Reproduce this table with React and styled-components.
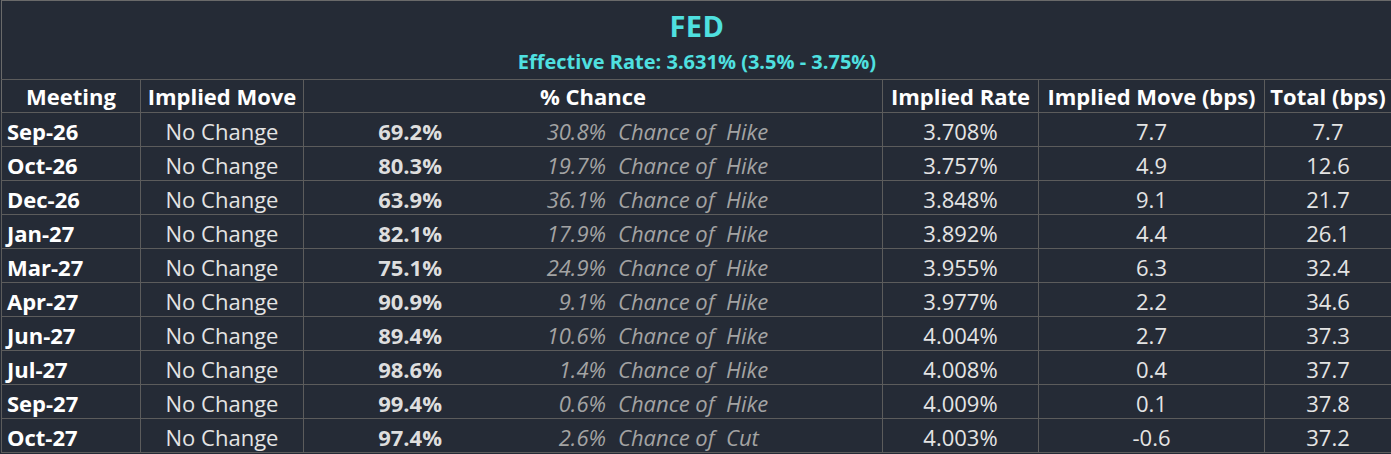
import React from 'react';
import styled, { createGlobalStyle } from 'styled-components';

const rows = [
  ['Sep-26', 'No Change', '69.2%', '30.8%', 'Hike', '3.708%', '7.7', '7.7'],
  ['Oct-26', 'No Change', '80.3%', '19.7%', 'Hike', '3.757%', '4.9', '12.6'],
  ['Dec-26', 'No Change', '63.9%', '36.1%', 'Hike', '3.848%', '9.1', '21.7'],
  ['Jan-27', 'No Change', '82.1%', '17.9%', 'Hike', '3.892%', '4.4', '26.1'],
  ['Mar-27', 'No Change', '75.1%', '24.9%', 'Hike', '3.955%', '6.3', '32.4'],
  ['Apr-27', 'No Change', '90.9%', '9.1%', 'Hike', '3.977%', '2.2', '34.6'],
  ['Jun-27', 'No Change', '89.4%', '10.6%', 'Hike', '4.004%', '2.7', '37.3'],
  ['Jul-27', 'No Change', '98.6%', '1.4%', 'Hike', '4.008%', '0.4', '37.7'],
  ['Sep-27', 'No Change', '99.4%', '0.6%', 'Hike', '4.009%', '0.1', '37.8'],
  ['Oct-27', 'No Change', '97.4%', '2.6%', 'Cut', '4.003%', '-0.6', '37.2'],
];

const GlobalStyle = createGlobalStyle`
  html, body {
    margin: 0;
    background: #252b36;
  }
  body {
    font-family: "Open Sans", "Noto Sans", sans-serif;
  }
`;

const Sheet = styled.div`
  width: 1390px;
  margin-left: 1px;
  border-top: 1px solid #6a6a6a;
  border-left: 1px solid #6a6a6a;
  background: #252b36;
`;

const TitleBlock = styled.div`
  height: 78px;
  display: flex;
  flex-direction: column;
  align-items: center;
  color: #4fe0e0;
  font-weight: 700;
`;

const Title = styled.div`
  font-size: 29px;
  line-height: 30px;
  margin-top: 10px;
  letter-spacing: 0.5px;
`;

const Subtitle = styled.div`
  font-size: 20px;
  line-height: 22px;
  margin-top: 10px;
`;

const Table = styled.table`
  border-collapse: collapse;
  table-layout: fixed;
  width: 1390px;
  margin-left: -1px;
  font-size: 22px;
  line-height: 26px;
`;

const HeadCell = styled.th`
  height: 32px;
  padding: 0;
  border: 1px solid #5c5c5c;
  color: #ffffff;
  font-weight: 700;
  text-align: center;
  white-space: nowrap;
  &:first-child { border-left-color: #6a6a6a; }
`;

const Cell = styled.td`
  height: 31px;
  padding: 2px ${p => (p.$left ? '5px' : '0')} 0;
  border: 1px solid #5c5c5c;
  color: ${p => (p.$bold ? '#ffffff' : '#e4e4e4')};
  font-weight: ${p => (p.$bold ? 700 : 400)};
  text-align: ${p => (p.$left ? 'left' : 'center')};
  white-space: nowrap;
`;

const Chance = styled.div`
  display: grid;
  grid-template-columns: 138px 164px 120px auto;
  align-items: center;
`;

const Prob = styled.span`
  text-align: right;
  font-weight: 700;
  color: #dedede;
`;

const Note = styled.span`
  font-style: italic;
  color: #a3a3a3;
  text-align: ${p => p.$align || 'left'};
  padding-left: ${p => p.$pad || 0}px;
`;

export default function App() {
  return (
    <>
      <GlobalStyle />
      <Sheet>
        <TitleBlock>
          <Title>FED</Title>
          <Subtitle>Effective Rate: 3.631% (3.5% - 3.75%)</Subtitle>
        </TitleBlock>
        <Table>
          <colgroup>
            <col style={{ width: 139 }} />
            <col style={{ width: 163 }} />
            <col style={{ width: 579 }} />
            <col style={{ width: 156 }} />
            <col style={{ width: 226 }} />
            <col style={{ width: 127 }} />
          </colgroup>
          <thead>
            <tr>
              <HeadCell>Meeting</HeadCell>
              <HeadCell>Implied Move</HeadCell>
              <HeadCell>% Chance</HeadCell>
              <HeadCell>Implied Rate</HeadCell>
              <HeadCell>Implied Move (bps)</HeadCell>
              <HeadCell>Total (bps)</HeadCell>
            </tr>
          </thead>
          <tbody>
            {rows.map(r => (
              <tr key={r[0]}>
                <Cell $left $bold>{r[0]}</Cell>
                <Cell>{r[1]}</Cell>
                <Cell>
                  <Chance>
                    <Prob>{r[2]}</Prob>
                    <Note $align="right">{r[3]}</Note>
                    <Note $pad={12}>Chance of</Note>
                    <Note>{r[4]}</Note>
                  </Chance>
                </Cell>
                <Cell>{r[5]}</Cell>
                <Cell>{r[6]}</Cell>
                <Cell>{r[7]}</Cell>
              </tr>
            ))}
          </tbody>
        </Table>
      </Sheet>
    </>
  );
}
